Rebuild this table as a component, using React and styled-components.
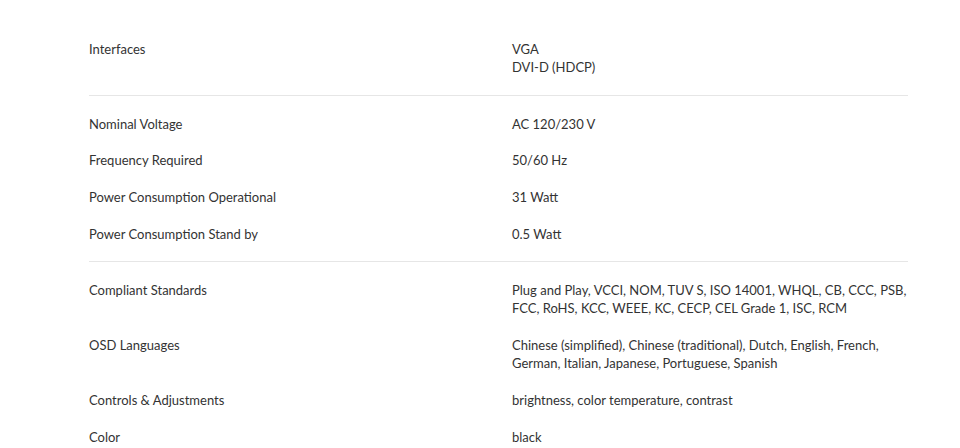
import React from "react";
import styled, { createGlobalStyle } from "styled-components";

const GlobalStyle = createGlobalStyle`
  html, body {
    margin: 0;
    padding: 0;
    background: #fff;
  }
  body {
    font-family: "Lato", "Open Sans", sans-serif;
    color: #333;
  }
`;

const SpecsWrapper = styled.div`
  width: 819px;
  padding: 21px 0 0 89px;
`;

const Group = styled.div`
  padding: 10px 0 9px;
  border-bottom: ${(p) => (p.last ? "none" : "1px solid #e6e6e6")};
`;

const Row = styled.div`
  display: grid;
  grid-template-columns: 423px 1fr;
  padding: 9px 0 9.7px;
  font-size: 13px;
  line-height: 18px;
`;

const Label = styled.div`
  color: #333;
`;

const Value = styled.div`
  color: #333;
  margin-right: -8px;
`;

const specs = [
  [["Interfaces", ["VGA", "DVI-D (HDCP)"]]],
  [
    ["Nominal Voltage", ["AC 120/230 V"]],
    ["Frequency Required", ["50/60 Hz"]],
    ["Power Consumption Operational", ["31 Watt"]],
    ["Power Consumption Stand by", ["0.5 Watt"]],
  ],
  [
    [
      "Compliant Standards",
      [
        "Plug and Play, VCCI, NOM, TUV S, ISO 14001, WHQL, CB, CCC, PSB, FCC, RoHS, KCC, WEEE, KC, CECP, CEL Grade 1, ISC, RCM",
      ],
    ],
    [
      "OSD Languages",
      [
        "Chinese (simplified), Chinese (traditional), Dutch, English, French, German, Italian, Japanese, Portuguese, Spanish",
      ],
    ],
    ["Controls & Adjustments", ["brightness, color temperature, contrast"]],
    ["Color", ["black"]],
  ],
];

export default function App() {
  return (
    <>
      <GlobalStyle />
      <SpecsWrapper>
        {specs.map((group, gi) => (
          <Group key={gi} last={gi === specs.length - 1}>
            {group.map(([label, lines]) => (
              <Row key={label}>
                <Label>{label}</Label>
                <Value>
                  {lines.map((l) => (
                    <div key={l}>{l}</div>
                  ))}
                </Value>
              </Row>
            ))}
          </Group>
        ))}
      </SpecsWrapper>
    </>
  );
}
